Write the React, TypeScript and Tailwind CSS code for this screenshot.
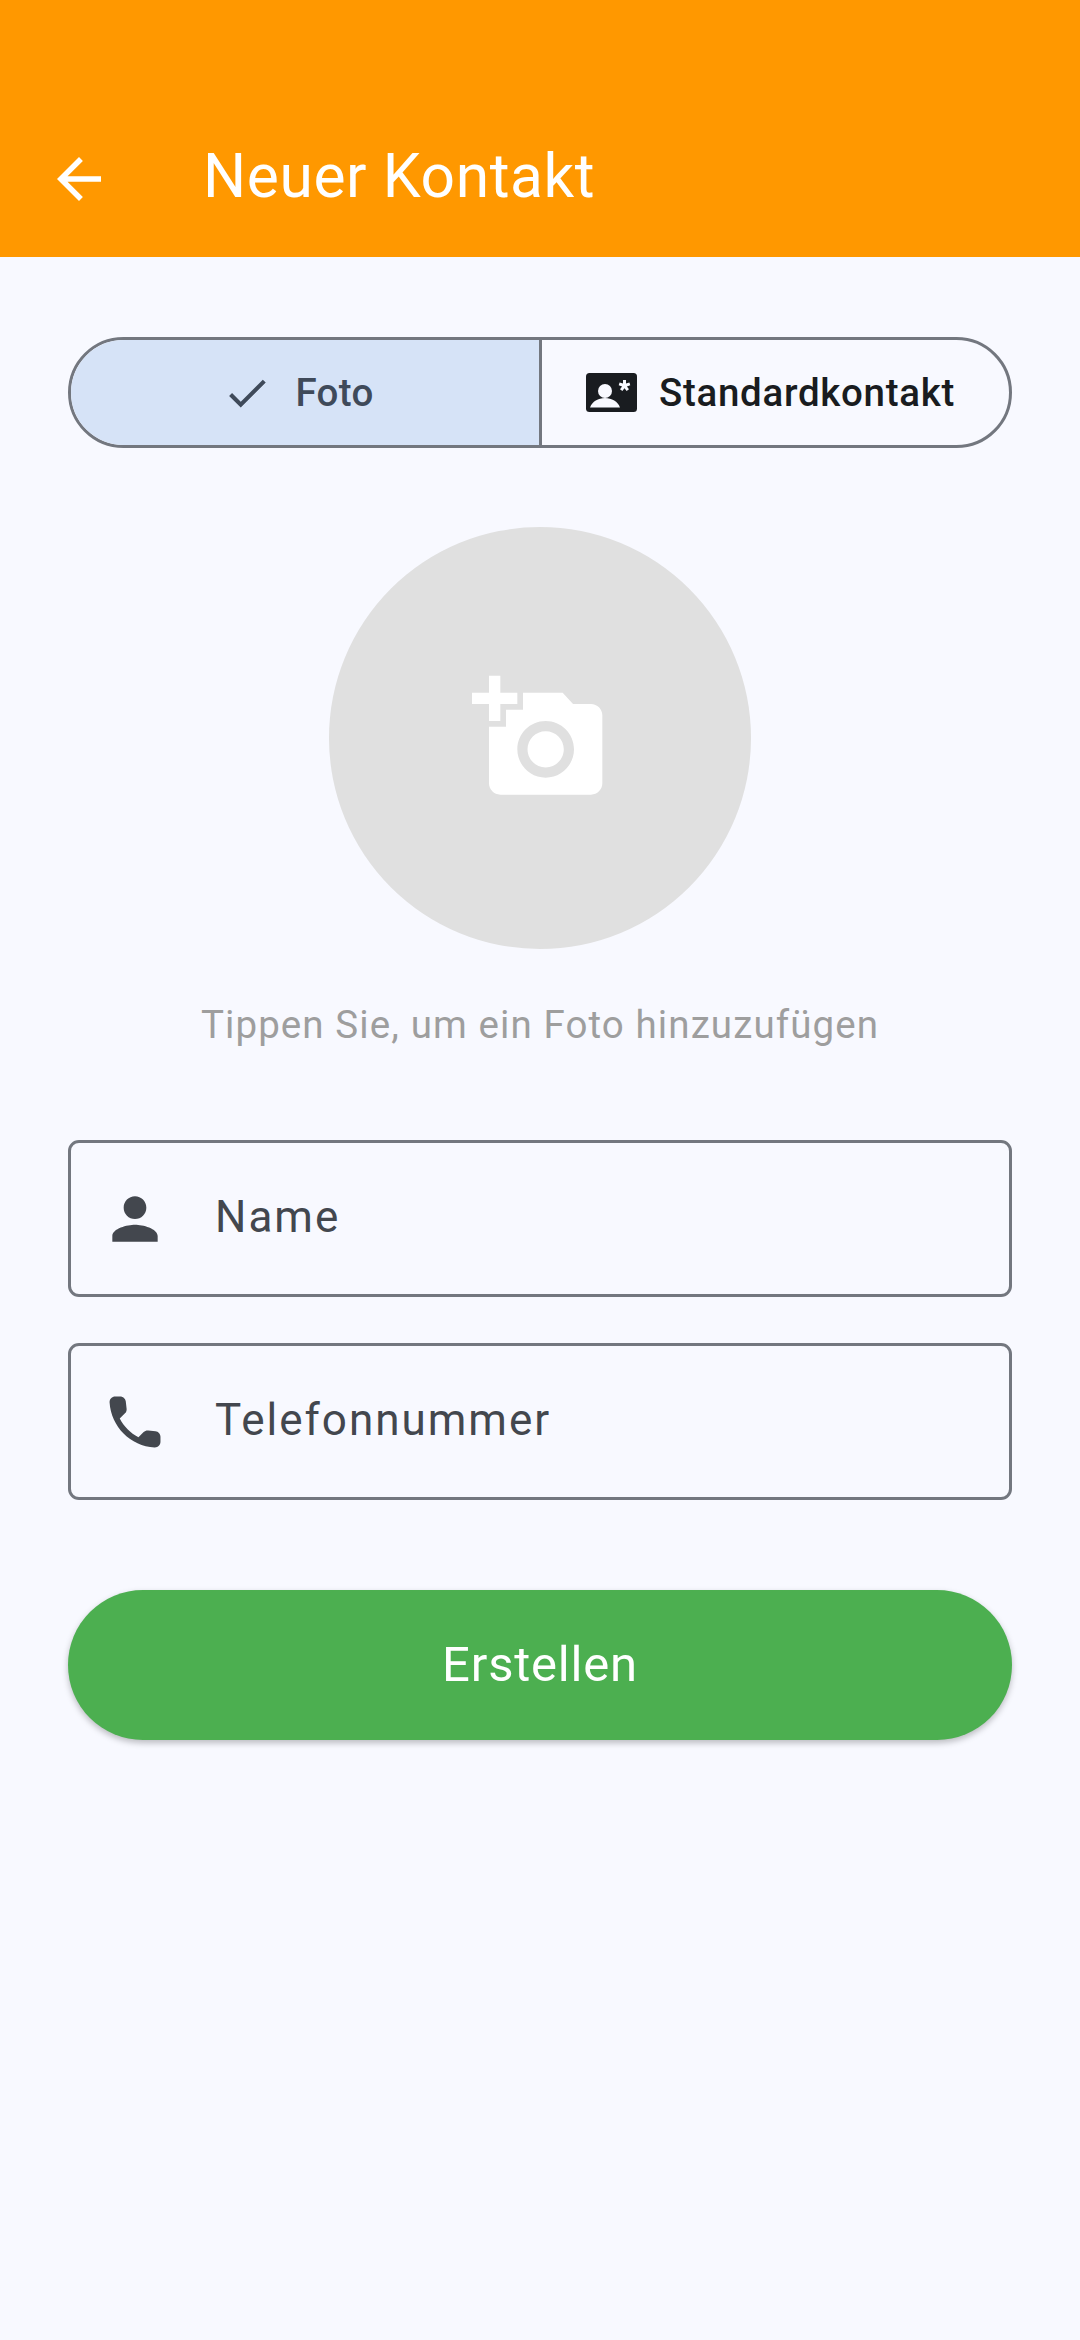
// New contact form screen
function BackArrow() {
  return (
    <svg width="66" height="66" viewBox="0 0 24 24" fill="#ffffff">
      <path d="M20 11H7.830l5.590-5.590L12 4l-8 8 8 8 1.410-1.410L7.830 13H20v-2z" />
    </svg>
  )
}

function Check() {
  return (
    <svg width="50" height="50" viewBox="0 0 24 24" fill="#3f4a5a">
      <path d="M9 16.170 4.830 12l-1.420 1.410L9 19 21 7l-1.410-1.410z" />
    </svg>
  )
}

// id card with a person and an asterisk
function ContactCard() {
  return (
    <svg width="51" height="39" viewBox="0 0 51 39">
      <rect width="51" height="39" rx="3.500" fill="#191c20" />
      <circle cx="19" cy="18" r="7" fill="#f8f9ff" />
      <path d="M4 34.500c2.200-6 8.200-9.500 15-9.500s12.800 3.500 15 9.500z" fill="#f8f9ff" />
      <path transform="translate(0 3)" d="M37 4h3v3.600l3.400-1.100.9 2.800-3.400 1.100 2.100 2.900-2.400 1.800-2.100-2.900-2.100 2.900-2.400-1.800 2.100-2.900-3.400-1.100.9-2.800 3.400 1.100z" fill="#f8f9ff" />
    </svg>
  )
}

function AddPhoto() {
  return (
    <svg width="136" height="136" viewBox="0 0 24 24" fill="#ffffff">
      <path d="M3 4V1h2v3h3v2H5v3H3V6H0V4h3zm3 6V7h3V4h7l1.830 2H21c1.100 0 2 .9 2 2v12c0 1.100-.9 2-2 2H5c-1.100 0-2-.9-2-2V10h3zm7 9c2.760 0 5-2.240 5-5s-2.240-5-5-5-5 2.240-5 5 2.240 5 5 5zm-3.200-5c0 1.770 1.430 3.200 3.200 3.200s3.200-1.430 3.200-3.200-1.430-3.200-3.200-3.200-3.200 1.430-3.200 3.200z" />
    </svg>
  )
}

function PersonIcon() {
  return (
    <svg width="68" height="68" viewBox="0 0 24 24" fill="#43474e">
      <path d="M12 12c2.210 0 4-1.790 4-4s-1.790-4-4-4-4 1.790-4 4 1.790 4 4 4zm0 2c-2.670 0-8 1.340-8 4v2h16v-2c0-2.660-5.330-4-8-4z" />
    </svg>
  )
}

function PhoneIcon() {
  return (
    <svg width="68" height="68" viewBox="0 0 24 24" fill="#43474e">
      <path d="M19.230 15.260l-2.540-.29c-.61-.07-1.210.14-1.640.57l-1.840 1.840c-2.830-1.440-5.150-3.750-6.590-6.590l1.850-1.850c.43-.43.64-1.030.57-1.640l-.29-2.520c-.12-1.010-.97-1.770-1.990-1.770H5.030c-1.130 0-2.070.94-2 2.070.53 8.540 7.360 15.360 15.890 15.890 1.130.07 2.070-.87 2.070-2v-1.730c.01-1.010-.75-1.860-1.760-1.980z" />
    </svg>
  )
}

function Field({ icon, label }: { icon: React.ReactNode; label: string }) {
  return (
    <div className="flex h-[157px] items-center rounded-[11px] border-[3px] border-[#73777f] pl-[30px]">
      <div className="flex w-[68px] justify-center">{icon}</div>
      <span className="ml-[46px] -mt-[4px] text-[44px] leading-none tracking-[2px] text-[#43474e]">{label}</span>
    </div>
  )
}

export default function App() {
  return (
    <div className="flex min-h-[2340px] flex-col bg-[#f8f9ff] font-['Roboto',sans-serif]">
      <header className="flex h-[257px] items-end bg-[#ff9800] pb-[45px] pl-[46px]">
        <BackArrow />
        <h1 className="ml-[91px] mb-[5px] text-[60.500px] leading-none tracking-[0.600px] text-white">Neuer Kontakt</h1>
      </header>

      <main className="flex flex-col px-[68px] pt-[80px]">
        <div className="flex h-[111px] overflow-hidden rounded-full border-[3px] border-[#73777f]">
          <div className="flex w-[471px] items-center justify-center gap-[23px] border-r-[3px] border-[#73777f] bg-[#d6e3f7] pr-[14px]">
            <Check />
            <span className="text-[38.500px] font-medium tracking-[0.300px] text-[#3f4a5a]">Foto</span>
          </div>
          <div className="flex flex-1 items-center justify-center gap-[22px] pr-[10px]">
            <ContactCard />
            <span className="text-[38.500px] font-medium tracking-[0.700px] text-[#191c20]">Standardkontakt</span>
          </div>
        </div>

        <div className="mt-[79px] flex h-[422px] w-[422px] items-center justify-center self-center rounded-full bg-[#e0e0e0]">
          <AddPhoto />
        </div>

        <p className="mt-[53px] text-center text-[38.500px] leading-[46px] tracking-[1.100px] text-[#9e9e9e]">
          Tippen Sie, um ein Foto hinzuzufügen
        </p>

        <div className="mt-[92px] flex flex-col gap-[46px]">
          <Field icon={<PersonIcon />} label="Name" />
          <Field icon={<PhoneIcon />} label="Telefonnummer" />
        </div>

        <button className="mt-[90px] h-[150px] rounded-full bg-[#4caf50] text-[49px] tracking-[0.800px] text-white shadow-[0_3px_6px_rgba(0,0,0,0.25)]">
          Erstellen
        </button>
      </main>
    </div>
  )
}
